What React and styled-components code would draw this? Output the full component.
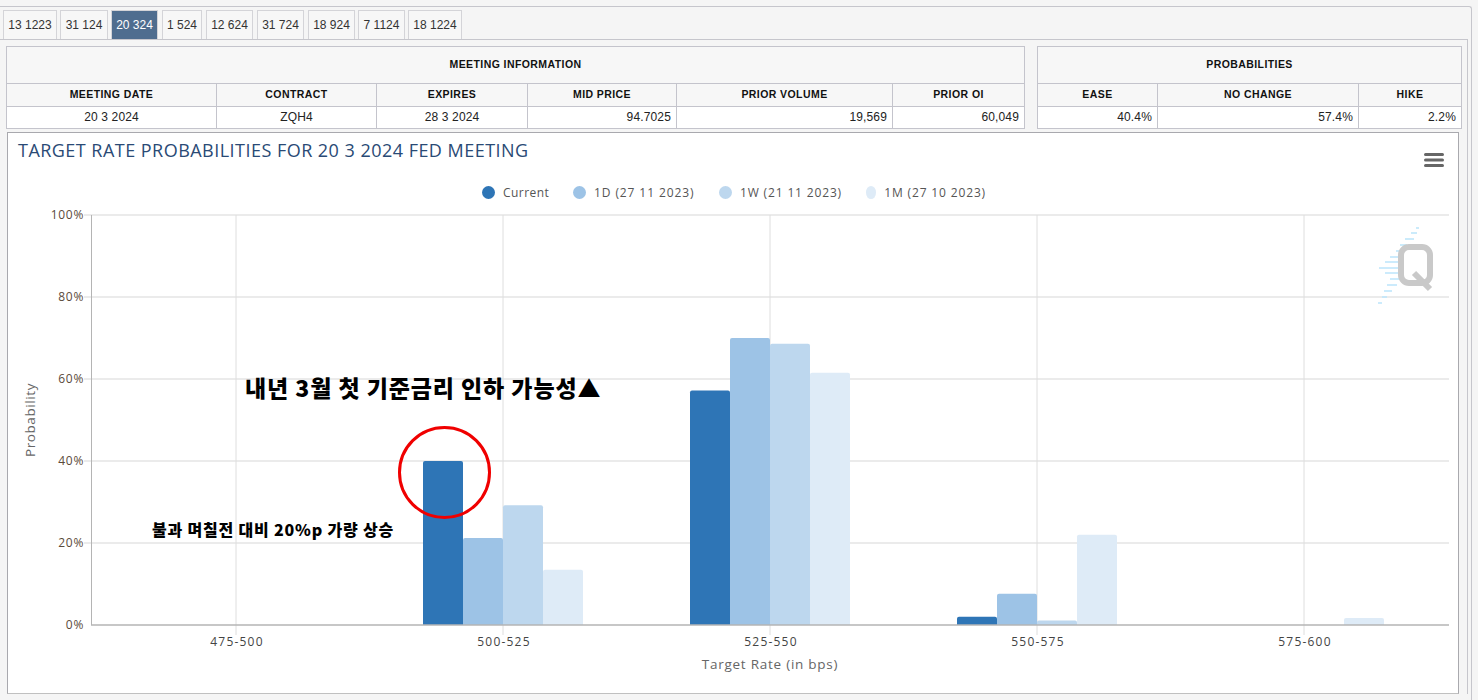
import React from "react"
import styled, { createGlobalStyle } from "styled-components"

const GlobalStyle = createGlobalStyle`
  html, body {
    margin: 0;
    padding: 0;
    background: #f5f5f5;
    font-family: "Liberation Sans", Arial, sans-serif;
  }
`

const tabs = ["13 1223", "31 124", "20 324", "1 524", "12 624", "31 724", "18 924", "7 1124", "18 1224"]

const legend = [
  { label: "Current", color: "#2e75b6", width: 91, spacing: 0.45 },
  { label: "1D (27 11 2023)", color: "#9dc3e6", width: 146, spacing: 0.9 },
  { label: "1W (21 11 2023)", color: "#bdd7ee", width: 147, spacing: 0.85 },
  { label: "1M (27 10 2023)", color: "#deebf7", width: 120, spacing: 0.85 },
]

const groups = [
  { label: "475-500", values: [0, 0, 0, 0] },
  { label: "500-525", values: [40, 21.2, 29.2, 13.5] },
  { label: "525-550", values: [57.2, 70, 68.6, 61.5] },
  { label: "550-575", values: [2, 7.6, 1.1, 22] },
  { label: "575-600", values: [0, 0, 0, 1.7] },
]

const dashes = [
  [76, 79, 98], [71, 77, 103], [65, 74, 109], [60, 67, 115], [56, 59, 121], [50, 59, 127],
  [45, 59, 132], [39, 59, 138], [45, 59, 143], [50, 59, 149], [47, 57, 155], [44, 52, 161],
  [42, 47, 167], [38, 42, 173],
]

const Page = styled.div`
  width: 1478px;
  height: 700px;
  padding-top: 6px;
  box-sizing: border-box;
  overflow: hidden;
`

const Frame = styled.div`
  width: 1472px;
  height: 694px;
  box-sizing: border-box;
  border-top: 1px solid #c6c6cc;
  border-right: 1px solid #c6c6cc;
  border-top-right-radius: 3px;
  padding-top: 3px;
`

const TabBar = styled.div`
  display: flex;
  width: 1468px;
  height: 30px;
  box-sizing: border-box;
  padding-left: 3px;
  border-bottom: 1px solid #c6c6cc;
`

const Tab = styled.div`
  height: 29px;
  box-sizing: border-box;
  width: ${props => props.$width}px;
  margin-right: ${props => props.$gap}px;
  border: 1px solid #d4d4d8;
  border-bottom: 0;
  background: ${props => (props.$active ? "#4f6d8f" : "#f7f7f7")};
  color: ${props => (props.$active ? "#ffffff" : "#333")};
  font-size: 12px;
  line-height: 29px;
  text-align: center;
`

const Body = styled.div`
  width: 1468px;
  height: 654px;
  box-sizing: border-box;
  border-right: 1px solid #c6c6cc;
  padding: 6px 0 0 6px;
`

const TableRow = styled.div`
  display: flex;
`

const Table = styled.table`
  width: ${props => props.$width}px;
  margin-right: ${props => props.$gap || 0}px;
  height: 83px;
  table-layout: fixed;
  border-collapse: collapse;
  border: 1px solid #c4c4cc;
  background: #f7f7f7;
  font-size: 11px;
`

const GroupHead = styled.th`
  height: 36px;
  padding: 0 0 2px;
  box-sizing: border-box;
  border: 1px solid #c4c4cc;
  font-size: 10.5px;
  letter-spacing: 0.42px;
  color: #111;
`

const ColHead = styled.th`
  height: 22px;
  padding: 0 0 2px;
  box-sizing: border-box;
  border: 1px solid #c4c4cc;
  font-size: 10.5px;
  letter-spacing: 0.42px;
  color: #111;
`

const Cell = styled.td`
  height: 21px;
  padding: 0 5px 2px;
  box-sizing: border-box;
  border: 1px solid #c4c4cc;
  background: #ffffff;
  color: #222;
  font-size: 12px;
  letter-spacing: 0.15px;
  text-align: ${props => (props.$right ? "right" : "center")};
`

const ChartCard = styled.div`
  position: relative;
  width: 1452px;
  height: 562px;
  margin: 3px 0 0 1px;
  box-sizing: border-box;
  border: 1px solid #a9a9ae;
  border-bottom-color: #c0c0c0;
  background: #ffffff;
  font-family: "Open Sans", sans-serif;
`

const ChartHead = styled.div`
  display: flex;
  justify-content: space-between;
  padding: 5px 14px 0 10px;
  height: 31px;
`

const ChartTitle = styled.h2`
  margin: 0;
  font-size: 18px;
  line-height: 24px;
  font-weight: 400;
  letter-spacing: 0.47px;
  color: #2a4a75;
`

const MenuIcon = styled.svg`
  width: 20px;
  height: 16px;
  margin-top: 14px;
`

const Legend = styled.div`
  display: flex;
  margin: 12px 0 2px 474px;
  height: 22px;
  align-items: center;
`

const LegendItem = styled.div`
  display: flex;
  align-items: center;
  gap: 8px;
  width: ${props => props.$width}px;
  flex: none;
  font-size: 12px;
  letter-spacing: ${props => props.$spacing}px;
  color: #555;
  white-space: nowrap;
`

const LegendDot = styled.span`
  width: 13px;
  height: 13px;
  border-radius: 50%;
  background: ${props => props.$color};
`

const Plot = styled.svg`
  display: block;
  font-family: "Open Sans", sans-serif;
`

const Note = styled.div`
  position: absolute;
  left: ${props => props.$left}px;
  top: ${props => props.$top}px;
  color: #000;
  font-family: "Noto Sans CJK KR", sans-serif;
  font-weight: 900;
  font-size: ${props => props.$size}px;
  letter-spacing: ${props => props.$spacing}px;
  white-space: nowrap;
`

const RedCircle = styled.div`
  position: absolute;
  left: 390px;
  top: 293px;
  width: 93px;
  height: 93px;
  box-sizing: border-box;
  border: 3px solid #f00000;
  border-radius: 50%;
`

function Watermark() {
  return (
    <g>
      {dashes.map(([x1, x2, y]) => (
        <line key={y} x1={1340 + x1} x2={1340 + x2} y1={y + 130} y2={y + 130} stroke="#bfe6fb" strokeWidth="1.6" />
      ))}
      <rect x="1401" y="247" width="29" height="36" rx="8" fill="none" stroke="#c9c9c9" strokeWidth="6" />
      <path d="M1414 273 L1430 289" stroke="#c9c9c9" strokeWidth="6" />
    </g>
  )
}

// plot area coordinates are page coordinates, the viewBox moves them under the legend
function Chart() {
  const y = v => 625 - v * 4.1
  const centers = [236, 503, 770, 1037, 1304]
  return (
    <Plot width="1450" height="490" viewBox="8 205 1450 490">
      {[0, 20, 40, 60, 80, 100].map(v => (
        <g key={v}>
          {v > 0 && <line x1="84" x2="1449" y1={y(v)} y2={y(v)} stroke="#e4e4e4" strokeWidth="1.4" />}
          <text x="84" y={y(v) + 4} textAnchor="end" fontSize="12" letterSpacing="0.7" fill="#5b4a3a">
            {v}%
          </text>
        </g>
      ))}
      {centers.map(x => (
        <line key={x} x1={x} x2={x} y1="215" y2="635" stroke="#dedede" />
      ))}
      <Watermark />
      {groups.map((group, i) =>
        group.values.map((v, j) => {
          if (!v) return null
          const left = centers[i] - 80 + j * 40
          const top = y(v)
          return (
            <path
              key={j}
              d={`M${left} 625 V${top + 2} Q${left} ${top} ${left + 2} ${top} H${left + 38} Q${left + 40} ${top} ${left + 40} ${top + 2} V625 Z`}
              fill={legend[j].color}
            />
          )
        })
      )}
      <line x1="91.5" x2="91.5" y1="215" y2="625" stroke="#b4b4b4" />
      <line x1="91" x2="1449" y1="625" y2="625" stroke="#b4b4b4" strokeWidth="1.4" />
      {groups.map((group, i) => (
        <text key={group.label} x={centers[i] + 1} y="646" textAnchor="middle" fontSize="12" letterSpacing="1.2" fill="#444">
          {group.label}
        </text>
      ))}
      <text x="770" y="669" textAnchor="middle" fontSize="13.5" letterSpacing="0.75" fill="#666">
        Target Rate (in bps)
      </text>
      <text transform="translate(35 420) rotate(-90)" textAnchor="middle" fontSize="13.5" letterSpacing="0.6" fill="#666">
        Probability
      </text>
    </Plot>
  )
}

export default function App() {
  return (
    <Page>
      <GlobalStyle />
      <Frame>
        <TabBar>
          {tabs.map((tab, i) => (
            <Tab
              key={tab}
              $active={tab === "20 324"}
              $width={[54, 48, 47, 40, 47, 47, 47, 47, 54][i]}
              $gap={[3, 3, 4, 4, 4, 4, 3, 3, 0][i]}
            >
              {tab}
            </Tab>
          ))}
        </TabBar>
        <Body>
          <TableRow>
            <Table $width={1018} $gap={12}>
              <colgroup>
                {[210, 160, 151, 149, 216, 132].map((w, i) => (
                  <col key={i} width={w} />
                ))}
              </colgroup>
              <tbody>
                <tr>
                  <GroupHead colSpan={6}>MEETING INFORMATION</GroupHead>
                </tr>
                <tr>
                  {["MEETING DATE", "CONTRACT", "EXPIRES", "MID PRICE", "PRIOR VOLUME", "PRIOR OI"].map(h => (
                    <ColHead key={h}>{h}</ColHead>
                  ))}
                </tr>
                <tr>
                  <Cell>20 3 2024</Cell>
                  <Cell>ZQH4</Cell>
                  <Cell>28 3 2024</Cell>
                  <Cell $right>94.7025</Cell>
                  <Cell $right>19,569</Cell>
                  <Cell $right>60,049</Cell>
                </tr>
              </tbody>
            </Table>
            <Table $width={424}>
              <colgroup>
                {[120, 201, 103].map((w, i) => (
                  <col key={i} width={w} />
                ))}
              </colgroup>
              <tbody>
                <tr>
                  <GroupHead colSpan={3}>PROBABILITIES</GroupHead>
                </tr>
                <tr>
                  {["EASE", "NO CHANGE", "HIKE"].map(h => (
                    <ColHead key={h}>{h}</ColHead>
                  ))}
                </tr>
                <tr>
                  <Cell $right>40.4%</Cell>
                  <Cell $right>57.4%</Cell>
                  <Cell $right>2.2%</Cell>
                </tr>
              </tbody>
            </Table>
          </TableRow>
          <ChartCard>
            <ChartHead>
              <ChartTitle>TARGET RATE PROBABILITIES FOR 20 3 2024 FED MEETING</ChartTitle>
              <MenuIcon viewBox="0 0 20 16">
                <path d="M1.5 2.5 H18.5 M1.5 8 H18.5 M1.5 13.5 H18.5" stroke="#666" strokeWidth="3" strokeLinecap="round" />
              </MenuIcon>
            </ChartHead>
            <Legend>
              {legend.map(item => (
                <LegendItem key={item.label} $width={item.width} $spacing={item.spacing}>
                  <LegendDot $color={item.color} />
                  {item.label}
                </LegendItem>
              ))}
            </Legend>
            <Chart />
            <Note $left={237} $top={237} $size={23} $spacing={0.9}>
              내년 3월 첫 기준금리 인하 가능성▲
            </Note>
            <Note $left={144} $top={384} $size={16} $spacing={0.8}>
              불과 며칠전 대비 20%p 가량 상승
            </Note>
            <RedCircle />
          </ChartCard>
        </Body>
      </Frame>
    </Page>
  )
}
